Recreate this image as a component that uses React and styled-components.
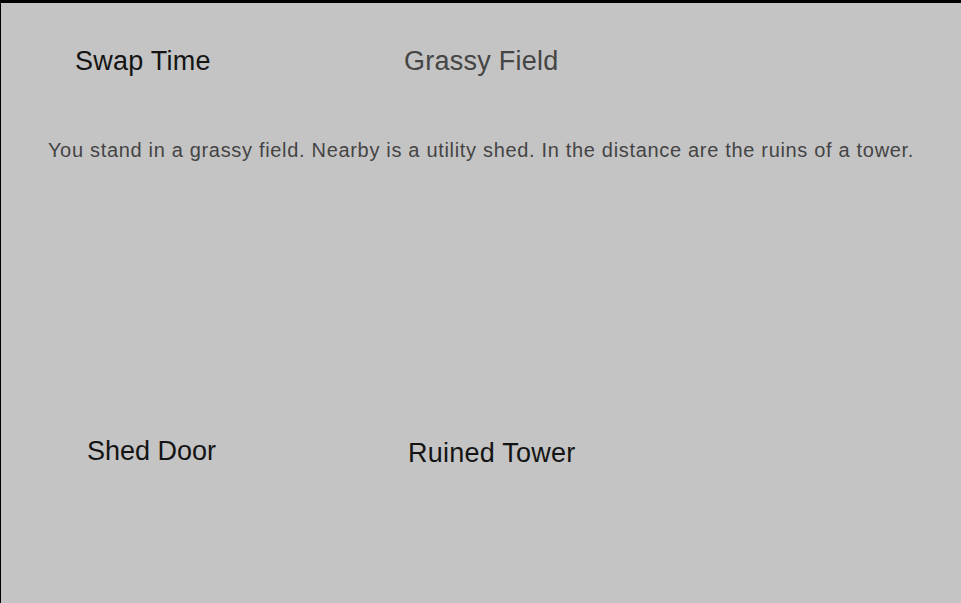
import React from "react";
import styled, { createGlobalStyle } from "styled-components";

const GlobalStyle = createGlobalStyle`
	html, body {
		margin: 0;
		padding: 0;
		background: #000;
	}
	body {
		font-family: "Liberation Sans", Arial, sans-serif;
	}
`;

const Screen = styled.div`
	box-sizing: border-box;
	width: 961px;
	height: 603px;
	border-top: 3px solid #000;
	border-left: 1px solid #000;
	background: #c4c4c4;
	display: flex;
	flex-direction: column;
	overflow: hidden;
`;

const Header = styled.div`
	display: flex;
	align-items: center;
	height: 32px;
	margin-top: 42px;
	padding-left: 74px;
`;

const Title = styled.div`
	font-size: 27px;
	line-height: 32px;
	letter-spacing: 0.25px;
	color: ${(p) => (p.$dim ? "#454545" : "#141414")};
	width: ${(p) => (p.$width ? p.$width + "px" : "auto")};
`;

const Description = styled.p`
	margin: 61px 0 0;
	text-align: center;
	font-size: 20px;
	line-height: 24px;
	letter-spacing: 0.68px;
	color: #444;
`;

const Choices = styled.div`
	display: flex;
	margin-top: 273px;
	padding-left: 86px;
	align-items: flex-start;
`;

const Choice = styled.button`
	background: none;
	border: none;
	padding: 0;
	font-family: inherit;
	font-size: 27px;
	line-height: 32px;
	letter-spacing: ${(p) => (p.$tight ? "0" : "0.25px")};
	color: #141414;
	cursor: pointer;
	width: ${(p) => (p.$width ? p.$width + "px" : "auto")};
	margin-top: ${(p) => (p.$offset || 0) + "px"};
	text-align: left;
`;

export default function App() {
	return (
		<>
			<GlobalStyle />
			<Screen>
				<Header>
					<Title $width={329}>Swap Time</Title>
					<Title $dim>Grassy Field</Title>
				</Header>
				<Description>
					You stand in a grassy field. Nearby is a utility shed. In the distance are the ruins of a tower.
				</Description>
				<Choices>
					<Choice $width={321} $tight>Shed Door</Choice>
					<Choice $offset={2}>Ruined Tower</Choice>
				</Choices>
			</Screen>
		</>
	);
}
